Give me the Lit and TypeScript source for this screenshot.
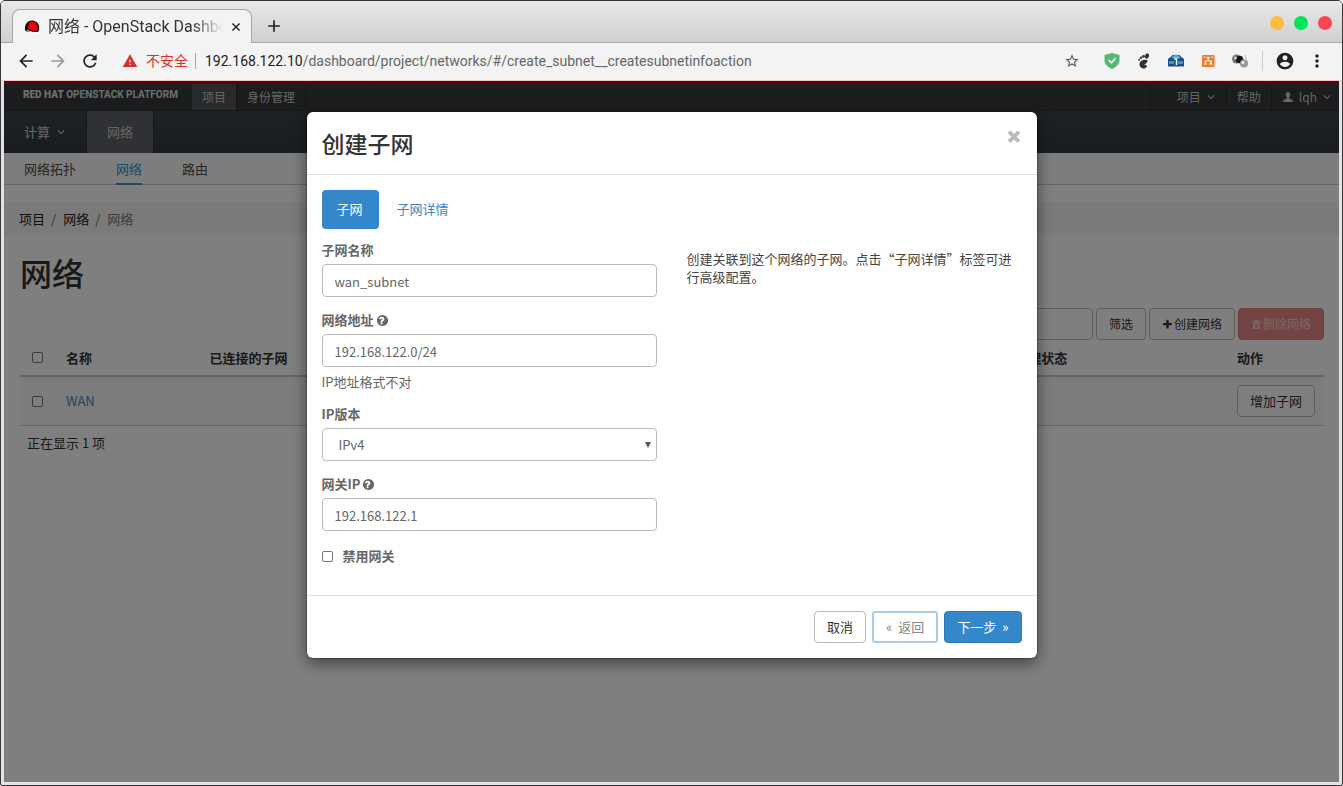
import { LitElement, html, css, svg } from "lit";
import { customElement, state } from "lit/decorators.js";

const icon = (path: string, cls = "", box = 24) =>
  html`<svg class="icon ${cls}" viewBox="0 0 ${box} ${box}" aria-hidden="true"><path d=${path}></path></svg>`;

const BACK = "M20 11H7.83l5.59-5.59L12 4l-8 8 8 8 1.41-1.41L7.83 13H20v-2z";
const FORWARD = "M12 4l-1.41 1.41L16.17 11H4v2h12.17l-5.58 5.59L12 20l8-8z";
const RELOAD =
  "M17.65 6.35C16.2 4.9 14.21 4 12 4c-4.42 0-7.99 3.58-7.99 8s3.57 8 7.99 8c3.73 0 6.84-2.55 7.73-6h-2.08c-.82 2.33-3.04 4-5.65 4-3.31 0-6-2.69-6-6s2.69-6 6-6c1.66 0 3.14.69 4.22 1.78L13 11h7V4l-2.35 2.35z";
const WARN = "M1 21h22L12 2 1 21zm12-3h-2v-2h2v2zm0-4h-2v-4h2v4z";
const STAR =
  "M22 9.24l-7.19-.62L12 2 9.19 8.63 2 9.24l5.46 4.73L5.82 21 12 17.27 18.18 21l-1.63-7.03L22 9.24zM12 15.4l-3.76 2.27 1-4.28-3.32-2.88 4.38-.38L12 6.1l1.71 4.04 4.38.38-3.32 2.88 1 4.28L12 15.4z";
const ACCOUNT =
  "M12 2C6.48 2 2 6.48 2 12s4.48 10 10 10 10-4.48 10-10S17.52 2 12 2zm0 3c1.66 0 3 1.34 3 3s-1.34 3-3 3-3-1.34-3-3 1.34-3 3-3zm0 14.2c-2.5 0-4.71-1.28-6-3.22.03-1.99 4-3.08 6-3.08 1.99 0 5.97 1.09 6 3.08-1.29 1.94-3.5 3.22-6 3.22z";
const MORE =
  "M12 8c1.1 0 2-.9 2-2s-.9-2-2-2-2 .9-2 2 .9 2 2 2zm0 2c-1.100 0-2 .9-2 2s.9 2 2 2 2-.9 2-2-.9-2-2-2zm0 6c-1.100 0-2 .9-2 2s.9 2 2 2 2-.9 2-2-.9-2-2-2z";
const HELP =
  "M896 1376v-192q0-14-9-23t-23-9h-192q-14 0-23 9t-9 23v192q0 14 9 23t23 9h192q14 0 23-9t9-23zm256-672q0-88-55.5-163t-138.5-116-170-41q-243 0-371 213-15 24 8 42l132 100q7 6 19 6 16 0 25-12 53-68 86-92 34-24 86-24 48 0 85.500 26t37.500 59q0 38-20 61t-68 45q-63 28-115.500 86.500t-52.500 125.500v36q0 14 9 23t23 9h192q14 0 23-9t9-23q0-19 21.500-49.500t54.500-49.500q32-18 49-28.500t46-35 44.500-48 28-60.500 12.500-81zm512 192q0 209-103 385.500t-279.500 279.500-385.500 103-385.500-103-279.500-279.500-103-385.500 103-385.500 279.500-279.500 385.500-103 385.500 103 279.500 279.500 103 385.500z";
const TIMES =
  "M1490 1322q0 40-28 68l-136 136q-28 28-68 28t-68-28l-294-294-294 294q-28 28-68 28t-68-28l-136-136q-28-28-28-68t28-68l294-294-294-294q-28-28-28-68t28-68l136-136q28-28 68-28t68 28l294 294 294-294q28-28 68-28t68 28l136 136q28 28 28 68t-28 68l-294 294 294 294q28 28 28 68z";
const PLUS =
  "M1600 736v192q0 40-28 68t-68 28h-416v416q0 40-28 68t-68 28h-192q-40 0-68-28t-28-68v-416h-416q-40 0-68-28t-28-68v-192q0-40 28-68t68-28h416v-416q0-40 28-68t68-28h192q40 0 68 28t28 68v416h416q40 0 68 28t28 68z";
const CHEVRON = "M12 17.500L3.500 9l1.800-1.800L12 13.900l6.700-6.700L20.500 9z";
const USER =
  "M12 2c3 0 4.600 2.200 4.600 5.200 0 2.400-1 4.600-2.400 5.700v1.600c1 1.200 7.800 1.900 7.800 6.500v1H2v-1c0-4.600 6.800-5.300 7.800-6.500v-1.600C8.400 11.800 7.400 9.600 7.400 7.200 7.400 4.200 9 2 12 2z";
const TRASH =
  "M9 2h6l1 3h5v3H3V5h5zM4.500 9h15v11.500c0 1-.5 1.500-1.500 1.500H6c-1 0-1.500-.5-1.500-1.500zM8 11v8h1.600v-8zm3.200 0v8h1.600v-8zm3.200 0v8H16v-8z";
const CLOSE = "M19 6.700L17.300 5 12 10.300 6.700 5 5 6.700l5.300 5.300L5 17.300 6.700 19l5.300-5.300 5.300 5.300 1.700-1.700-5.300-5.300z";
const ADD = "M19 13h-6v6h-2v-6H5v-2h6V5h2v6h6v2z";

const redHat = svg`
  <path d="M1 11C.3 5.500 3.500 1.500 8 1.500s8 3.500 7 9.500c-.3 1.200-.8 1.800-1.500 2L2.500 12.500z" fill="#1a0506"></path>
  <path d="M4.500 7c.2-2.600 1.500-4.600 3-4.600.8 0 1.300.6 2.200.5 2.300-.1 3.500 2.600 3.800 5.300.8.900 1 2 .4 3-2.300 1.600-6.500.6-9-.9C3.600 9.500 3.500 8.200 4.500 7z" fill="#e30613"></path>
  <path d="M3 10.200c2 1.900 6.500 3.800 10.500 2.800l-1.500 1.500L3.500 12z" fill="#fff"></path>`;

@customElement("app-root")
export class AppRoot extends LitElement {
  static styles = css`
    :host {
      display: flex;
      flex-direction: column;
      height: 100vh;
      box-sizing: border-box;
      border: 1px solid #39363b;
      border-radius: 5px 5px 2px 2px;
      background: #e4e2e4;
      overflow: hidden;
      font: 13px/18px "Noto Sans CJK SC", sans-serif;
      color: #333;
    }
    *, *::before, *::after { box-sizing: border-box; }
    a { color: inherit; text-decoration: none; }
    button, input, select { font: inherit; color: inherit; margin: 0; }
    button { cursor: pointer; }
    ul, ol, h1, h2, p { margin: 0; padding: 0; list-style: none; font-weight: 400; }
    .icon { width: 16px; height: 16px; fill: currentColor; flex: none; display: block; }

    /* browser frame */
    .strip {
      display: flex;
      align-items: flex-end;
      height: 42px;
      flex: none;
      padding: 0 10px 0 11px;
      background: linear-gradient(#e8e8e8, #d0d0d0);
      border-bottom: 1px solid #a9a9a9;
    }
    .tab {
      display: flex;
      align-items: center;
      width: 240px;
      height: 34px;
      margin-bottom: -1px;
      padding: 0 8px 0 11px;
      background: #f3f3f3;
      border: 1px solid #a9a9a9;
      border-bottom: 0;
      border-radius: 8px 8px 0 0;
      font: 16px/24px Roboto, "Noto Sans CJK SC", sans-serif;
      color: #333;
    }
    .tab-title {
      flex: 1;
      margin: 0 6px 0 8px;
      overflow: hidden;
      white-space: nowrap;
      -webkit-mask-image: linear-gradient(90deg, #000 82%, transparent);
      mask-image: linear-gradient(90deg, #000 82%, transparent);
    }
    .plain { display: flex; padding: 0; border: 0; background: none; color: #222; }
    .tab-close .icon { width: 14px; height: 14px; }
    .new-tab { padding: 0 0 6px 12px; }
    .new-tab .icon { width: 20px; height: 20px; }
    .lights { display: flex; gap: 10px; margin-left: auto; padding-bottom: 12px; }
    .light { width: 14px; height: 14px; border-radius: 50%; padding: 0; border: 0; background: #fdbc40; }
    .light.green { background: #00e45b; }
    .light.red { background: #fb4552; }
    .toolbar {
      display: flex;
      align-items: center;
      height: 37px;
      flex: none;
      padding: 0 19px 2px 15px;
      background: #f3f3f4;
    }
    .nav-buttons { display: flex; gap: 12px; }
    .nav-buttons .icon { width: 20px; height: 20px; }
    .faded { color: #999; }
    .address {
      display: flex;
      align-items: center;
      flex: 1;
      margin-left: 22px;
      font: 14px/20px Roboto, "Noto Sans CJK SC", sans-serif;
      color: #222;
      white-space: nowrap;
    }
    .danger { display: flex; align-items: center; gap: 8px; color: #d8302a; padding-right: 7px; border-right: 1px solid #aaa; line-height: 16px; }
    .url { margin-left: 9px; }
    .url-path { color: #666; }
    .extensions { display: flex; align-items: center; gap: 16px; }
    .bookmark { margin-right: 8px; color: #555; }
    .profile { display: flex; align-items: center; gap: 12px; margin-left: 14px; padding-left: 12px; border-left: 1px solid #ccc; }
    .profile .icon { width: 20px; height: 20px; }
    .menu .icon { width: 20px; margin-right: -4px; }

    /* dashboard */
    .page {
      position: relative;
      flex: 1;
      margin: 0 3px 3px;
      background: #fff;
      overflow: hidden;
      border-top: 1px solid #e6c8c8;
    }
    .masthead {
      display: flex;
      height: 29px;
      border-top: 3px solid #c60010;
      background: #34393d;
      font-size: 12px;
      color: #ccc;
    }
    .brand { min-width: 188px; padding: 1px 5px 0 19px; font: 700 10px/20px Roboto, sans-serif; color: #ddd; white-space: nowrap; }
    .brand b { font-weight: 900; }
    .masthead-link { display: flex; align-items: center; gap: 5px; padding: 0 10px; border-right: 1px solid #272b2e; }
    .masthead-link.current { background: #505459; }
    .account { display: flex; margin-left: auto; border-left: 1px solid #272b2e; }
    .account .masthead-link:first-child { padding-left: 26px; }
    .account .masthead-link:last-child { border: 0; padding-right: 7px; }
    .chevron { width: 10px; height: 10px; }
    .person { width: 12px; height: 12px; }
    .primary { display: flex; height: 43px; background: linear-gradient(#3d4449, #343a3e); color: #ccc; border-top: 1px solid #2c3135; }
    .primary-link { display: flex; align-items: center; gap: 6px; padding: 0 20px; border-right: 1px solid #2c3135; }
    .primary-link.current { background: #60636a; }
    .secondary { display: flex; gap: 40px; padding: 0 20px; background: #fbfbfb; border-bottom: 1px solid #c6c6c6; height: 32px; color: #4d4d4d; }
    .secondary-link { line-height: 32px; height: 32px; }
    .secondary-link.current { color: #2b9ace; border-bottom: 2px solid #2b9ace; }
    .crumbs { display: flex; margin-top: 17px; padding: 8px 15px 7px; background: #f4f4f4; color: #222; }
    .crumb + .crumb::before { content: "/"; padding: 0 7px 0 6px; color: #666; }
    .crumb.here { color: #777; }
    .content { padding: 0 15px 0 16px; }
    .title { font-size: 32px; line-height: 48px; margin: 13px 0 12px; color: #333; font-weight: 500; }
    .actions { display: flex; justify-content: flex-end; gap: 3px; }
    .btn {
      display: inline-flex;
      align-items: center;
      justify-content: center;
      gap: 1px;
      height: 32px;
      padding: 0 12px;
      border: 1px solid #bbb;
      border-radius: 4px;
      background: #fff;
      color: #333;
      white-space: nowrap;
    }
    .actions .btn { font-size: 12px; }
    .btn .icon { width: 11px; height: 11px; }
    .btn.delete { background: #e98888; border-color: #e07c7c; color: #f5d0d0; }
    .filter { width: 160px; height: 32px; border: 1px solid #bbb; border-radius: 4px; background: #fff; padding: 0 12px; }
    .grid { width: 100%; border-collapse: collapse; table-layout: fixed; color: #333; }
    .grid th { text-align: left; padding: 8px; height: 36px; font-weight: 700; border-bottom: 2px solid #c4c4c4; }
    .grid td { padding: 8px; height: 49px; background: #f9f9f9; border-bottom: 1px solid #cfcfcf; }
    .grid th:first-child, .grid td:first-child { padding-left: 12px; }
    .c-check { width: 38px; }
    .c-name { width: 11%; }
    .c-state { width: 17%; }
    .c-action { width: 95px; }
    .net { color: #3e8ac8; }
    .count { padding: 8px 7px; }
    .check {
      appearance: none;
      display: block;
      width: 11px;
      height: 11px;
      border: 1px solid #767676;
      border-radius: 2px;
      background: #fff;
    }
    .check:checked { background: #337ab7; }

    /* dialog */
    .backdrop { position: absolute; inset: 0; background: rgba(0, 0, 0, 0.5); }
    .dialog {
      width: 730px;
      max-width: 100%;
      margin: 31px auto 0;
      border-radius: 6px;
      background: #fff;
      box-shadow: 0 5px 15px rgba(0, 0, 0, 0.5), 0 0 0 1px rgba(0, 0, 0, 0.2);
    }
    .dialog-head { display: flex; justify-content: space-between; padding: 15px 14px 15px 15px; border-bottom: 1px solid #e0e0e0; }
    .dialog-title { font-size: 23px; line-height: 32px; color: #333; font-weight: 500; }
    .dismiss { height: 18px; color: #bbb; }
    .dismiss .icon { width: 18px; height: 18px; }
    .dialog-body { padding: 15px 15px 28px; }
    .pills { display: flex; gap: 3px; }
    .pill { padding: 10px 16px 11px 15px; border: 0; border-radius: 4px; background: none; color: #3a87c6; }
    .pill.active { background: #3488c9; color: #fff; }
    .columns { display: grid; grid-template-columns: 1fr 1fr; gap: 30px; padding-top: 12px; color: #666; }
    .field { display: flex; flex-direction: column; margin-bottom: 14px; }
    .label { display: flex; align-items: center; gap: 2px; margin-bottom: 5px; font-weight: 700; line-height: 18px; }
    .label .icon { width: 13px; height: 13px; }
    .input { width: 100%; height: 33px; padding: 1px 12px 0; border: 1px solid #bbb; border-radius: 4px; background: #fff; color: #666; outline: none; }
    .select-wrap { display: grid; align-items: center; }
    .select-wrap > * { grid-area: 1 / 1; }
    .select { appearance: none; padding-left: 16px; }
    .arrow { justify-self: end; margin-right: 6px; width: 6px; height: 6px; pointer-events: none; fill: #555; }
    .hint { margin-top: 6px; }
    .toggle { display: flex; align-items: center; gap: 10px; line-height: 22px; font-weight: 700; }
    .about { padding-top: 9px; color: #444; }
    .dialog-foot { display: flex; justify-content: flex-end; gap: 6px; padding: 15px; border-top: 1px solid #e0e0e0; }
    .dialog-foot .btn { gap: 6px; }
    .btn.back { color: #888; border: 2px solid #a9cbec; border-radius: 3px; }
    .btn.next { background: #3488c9; border-color: #2b78b5; color: #fff; }
  `;

  @state() private step = 0;
  private tabs = ["子网", "子网详情"];

  private renderBrowser() {
    return html`
      <div class="strip">
        <div class="tab">
          <svg class="icon" viewBox="0 0 16 16" aria-hidden="true">${redHat}</svg>
          <span class="tab-title">网络 - OpenStack Dashboard</span>
          <button class="plain tab-close" aria-label="关闭标签页">${icon(CLOSE)}</button>
        </div>
        <button class="plain new-tab" aria-label="新标签页">${icon(ADD)}</button>
        <div class="lights">
          <button class="light" aria-label="最小化"></button>
          <button class="light green" aria-label="最大化"></button>
          <button class="light red" aria-label="关闭"></button>
        </div>
      </div>
      <div class="toolbar">
        <div class="nav-buttons">
          <button class="plain" aria-label="后退">${icon(BACK)}</button>
          <button class="plain faded" aria-label="前进">${icon(FORWARD)}</button>
          <button class="plain" aria-label="刷新">${icon(RELOAD)}</button>
        </div>
        <div class="address">
          <span class="danger">${icon(WARN)}不安全</span>
          <span class="url">192.168.122.10<span class="url-path">/dashboard/project/networks/#/create_subnet__createsubnetinfoaction</span></span>
        </div>
        <div class="extensions">
          <button class="plain bookmark" aria-label="收藏">${icon(STAR)}</button>
          <svg class="icon" viewBox="0 0 16 16">
            <path d="M8 0l7.500 2v5c0 4-3 7-7.500 9C3.500 14 .5 11 .5 7V2z" fill="#56b776"></path>
            <path d="M4.700 7l2.800 2.900 4-4.700" fill="none" stroke="#fff" stroke-width="1.600"></path>
          </svg>
          <svg class="icon" viewBox="0 0 16 16">
            <ellipse cx="11" cy="3" rx="1.900" ry="2.700" transform="rotate(20 11 3)"></ellipse>
            <circle cx="7.500" cy="3.400" r="1.400"></circle><circle cx="5" cy="4.800" r="1.200"></circle><circle cx="3.200" cy="6.800" r="1"></circle>
            <path d="M11.500 7.500C10 5.800 4 7 3.500 10.500c-.4 3 2 5 4.500 5 2 0 3.200-1.700 2.700-3-.5-1-1.600-.6-2.300-.2 0-1.500 3.800-2.500 3.100-4.800z"></path>
          </svg>
          <svg class="icon" viewBox="0 0 16 16">
            <path d="M0 6l2-1.500L4.500 2h7L14 4.500 16 6v7.500H0z" fill="#1d4f86"></path>
            <path d="M3 4.500L8 1l5 3.500-5 2z" fill="#56ade0"></path>
            <path d="M1 8h5v3H1zM10 8h5v3h-5z" fill="#4b8fc5"></path>
            <path d="M6.500 6H8.500v6" stroke="#fff" stroke-width="1.500" fill="none"></path>
          </svg>
          <svg class="icon" viewBox="0 0 16 16">
            <rect x="2" y="2" width="12.500" height="12" rx="1" fill="#f07d30"></rect>
            <path d="M8.200 5v3M5.500 11.500V8h5.500v3.500M4 11h3M9.500 11h3M6.800 4.500h3" stroke="#fff" stroke-width="1.200" fill="none"></path>
            <path d="M4 4h1.500M11.500 4H13" stroke="#fff"></path>
          </svg>
          <svg class="icon" viewBox="0 0 16 16">
            <circle cx="4.500" cy="6" r="4.500" fill="#777"></circle><circle cx="7.500" cy="6.500" r="3.800" fill="#161616"></circle>
            <circle cx="12" cy="10.500" r="4" fill="#999"></circle><path d="M13 2l1.500 5" stroke="#ccc" stroke-width="1.500"></path>
            <circle cx="3.500" cy="5" r="1.500" fill="#ccc"></circle><circle cx="11" cy="9.500" r="1.500" fill="#eee"></circle>
          </svg>
        </div>
        <div class="profile">
          <button class="plain" aria-label="账户">${icon(ACCOUNT)}</button>
          <button class="plain menu" aria-label="菜单">${icon(MORE)}</button>
        </div>
      </div>`;
  }

  private renderDashboard() {
    return html`
      <nav class="masthead">
        <a class="brand" href="#"><b>RED HAT</b> OPENSTACK PLATFORM</a>
        <a class="masthead-link current" href="#">项目</a>
        <a class="masthead-link" href="#">身份管理</a>
        <div class="account">
          <a class="masthead-link" href="#">项目 ${icon(CHEVRON, "chevron")}</a>
          <a class="masthead-link" href="#">帮助</a>
          <a class="masthead-link" href="#">${icon(USER, "person")}lqh${icon(CHEVRON, "chevron")}</a>
        </div>
      </nav>
      <nav class="primary">
        <a class="primary-link" href="#">计算 ${icon(CHEVRON, "chevron")}</a>
        <a class="primary-link current" href="#">网络</a>
      </nav>
      <nav class="secondary">
        <a class="secondary-link" href="#">网络拓扑</a>
        <a class="secondary-link current" href="#">网络</a>
        <a class="secondary-link" href="#">路由</a>
      </nav>
      <ol class="crumbs">
        <li class="crumb"><a href="#">项目</a></li>
        <li class="crumb"><a href="#">网络</a></li>
        <li class="crumb here">网络</li>
      </ol>
      <main class="content">
        <h1 class="title">网络</h1>
        <div class="actions">
          <input class="filter" aria-label="筛选条件" />
          <button class="btn">筛选</button>
          <button class="btn">${icon(PLUS, "", 1792)}创建网络</button>
          <button class="btn delete">${icon(TRASH)}删除网络</button>
        </div>
        <table class="grid">
          <colgroup><col class="c-check" /><col class="c-name" /><col /><col class="c-state" /><col class="c-action" /></colgroup>
          <thead>
            <tr>
              <th><input class="check" type="checkbox" aria-label="全选" /></th>
              <th>名称</th><th>已连接的子网</th><th>管理状态</th><th>动作</th>
            </tr>
          </thead>
          <tbody>
            <tr>
              <td><input class="check" type="checkbox" aria-label="WAN" /></td>
              <td><a class="net" href="#">WAN</a></td><td></td><td></td>
              <td><button class="btn">增加子网</button></td>
            </tr>
          </tbody>
        </table>
        <p class="count">正在显示 1 项</p>
      </main>`;
  }

  private renderDialog() {
    return html`
      <div class="backdrop">
        <section class="dialog" role="dialog" aria-labelledby="dialog-title">
          <header class="dialog-head">
            <h2 class="dialog-title" id="dialog-title">创建子网</h2>
            <button class="plain dismiss" aria-label="关闭">${icon(TIMES, "", 1792)}</button>
          </header>
          <div class="dialog-body">
            <div class="pills">
              ${this.tabs.map(
                (t, i) => html`<button class="pill ${i === this.step ? "active" : ""}" @click=${() => (this.step = i)}>${t}</button>`
              )}
            </div>
            <div class="columns">
              <form>
                <div class="field">
                  <label class="label" for="name">子网名称</label>
                  <input class="input" id="name" value="wan_subnet" />
                </div>
                <div class="field">
                  <label class="label" for="cidr">网络地址 ${icon(HELP, "", 1792)}</label>
                  <input class="input" id="cidr" value="192.168.122.0/24" />
                  <span class="hint">IP地址格式不对</span>
                </div>
                <div class="field">
                  <label class="label" for="version">IP版本</label>
                  <div class="select-wrap">
                    <select class="input select" id="version"><option>IPv4</option><option>IPv6</option></select>
                    <svg class="arrow" viewBox="0 0 6 6"><path d="M0 0h6L3 6z"></path></svg>
                  </div>
                </div>
                <div class="field">
                  <label class="label" for="gateway">网关IP ${icon(HELP, "", 1792)}</label>
                  <input class="input" id="gateway" value="192.168.122.1" />
                </div>
                <label class="toggle"><input class="check" type="checkbox" />禁用网关</label>
              </form>
              <p class="about">创建关联到这个网络的子网。点击“子网详情”标签可进行高级配置。</p>
            </div>
          </div>
          <footer class="dialog-foot">
            <button class="btn">取消</button>
            <button class="btn back" @click=${() => (this.step = 0)}><span>«</span>返回</button>
            <button class="btn next" @click=${() => (this.step = 1)}>下一步<span>»</span></button>
          </footer>
        </section>
      </div>`;
  }

  render() {
    return html`${this.renderBrowser()}
      <div class="page">${this.renderDashboard()}${this.renderDialog()}</div>`;
  }
}
